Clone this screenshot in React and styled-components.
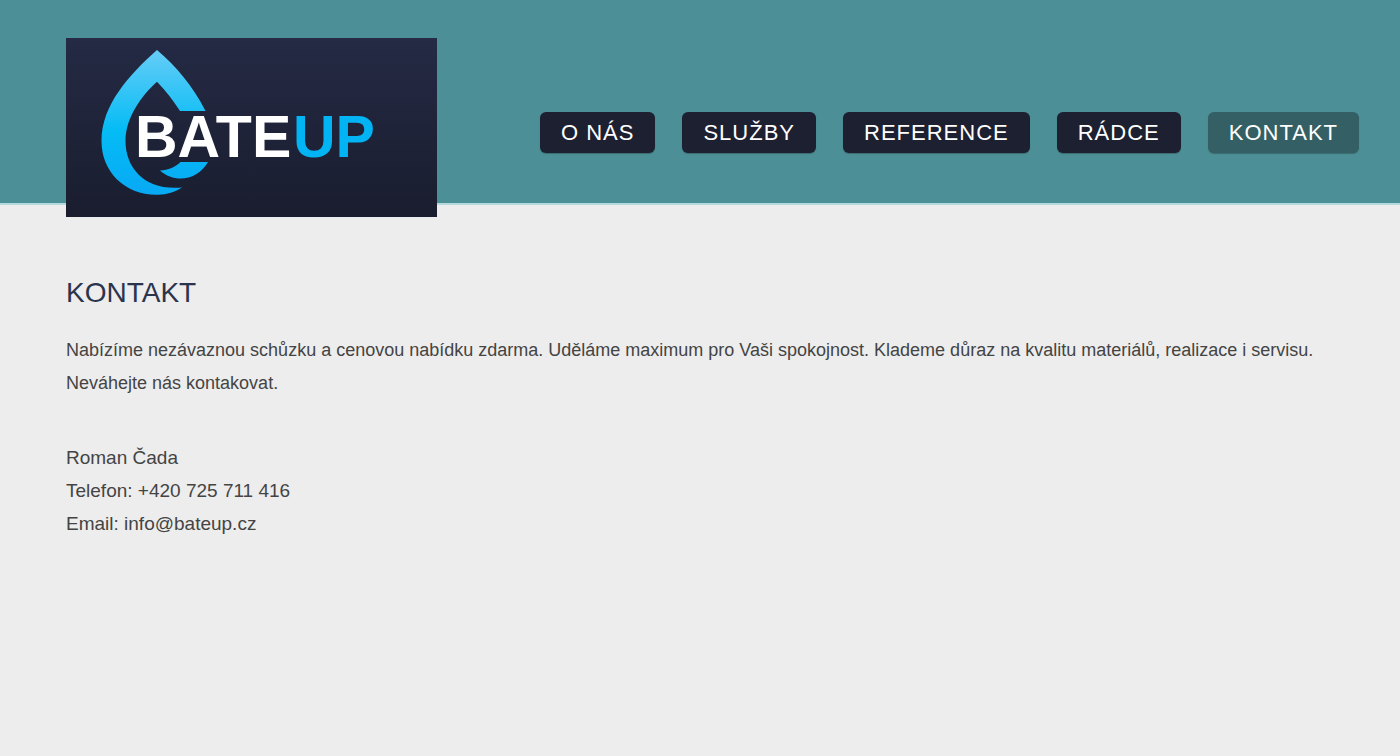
import React from "react";
import styled, { createGlobalStyle } from "styled-components";

const GlobalStyle = createGlobalStyle`
  * {
    box-sizing: border-box;
    margin: 0;
    padding: 0;
  }
  body {
    background: #ededed;
    color: #444;
    font-family: "Liberation Sans", Arial, sans-serif;
  }
`;

const Header = styled.header`
  display: flex;
  justify-content: space-between;
  align-items: flex-start;
  height: 205px;
  padding: 38px 41px 0 66px;
  background: #4d8f96;
  border-bottom: 2px solid #b4dadd;
`;

const LogoLink = styled.a`
  flex-shrink: 0;
  line-height: 0;
`;

const LogoText = styled.text`
  font-family: "Liberation Sans", Arial, sans-serif;
  font-size: 59px;
  font-weight: 700;
`;

const Nav = styled.nav`
  padding-top: 74px;
`;

const NavList = styled.ul`
  display: flex;
  gap: 27px;
  list-style: none;
`;

const NavLink = styled.a`
  display: block;
  padding: 0 21px;
  border-radius: 6px;
  background: ${({ $active }) => ($active ? "#345f64" : "#1c2030")};
  box-shadow: 0 1px 1px rgba(0, 0, 0, 0.25);
  color: #fff;
  font-size: 22px;
  line-height: 41px;
  letter-spacing: 1px;
  text-decoration: none;
  text-transform: uppercase;
  white-space: nowrap;
`;

const Content = styled.main`
  padding: 71px 66px;
`;

const Title = styled.h1`
  margin-bottom: 25px;
  color: #2b344d;
  font-size: 28px;
  font-weight: 400;
  line-height: 33px;
  text-transform: uppercase;
`;

const Text = styled.p`
  margin-bottom: 41px;
  font-size: 18px;
  line-height: 33px;
`;

const Contact = styled.address`
  font-size: 19px;
  font-style: normal;
  line-height: 33px;
`;

const ContactLink = styled.a`
  color: inherit;
  text-decoration: none;
`;

const links = [
  { name: "O nás", href: "#o-nas" },
  { name: "Služby", href: "#sluzby" },
  { name: "Reference", href: "#reference" },
  { name: "Rádce", href: "#radce" },
  { name: "Kontakt", href: "#kontakt", active: true },
];

const Logo = () => (
  <svg width="371" height="179" viewBox="0 0 371 179" role="img" aria-label="BateUp">
    <defs>
      <linearGradient id="logoBg" x1="0" y1="0" x2="0" y2="1">
        <stop offset="0" stopColor="#252a45" />
        <stop offset="1" stopColor="#191d2e" />
      </linearGradient>
      <linearGradient id="drop" x1="0" y1="12" x2="0" y2="157" gradientUnits="userSpaceOnUse">
        <stop offset="0" stopColor="#66cdf7" />
        <stop offset="0.55" stopColor="#05bcf5" />
        <stop offset="1" stopColor="#08a9f4" />
      </linearGradient>
    </defs>
    <rect width="371" height="179" fill="url(#logoBg)" />
    <g fill="url(#drop)">
      <path d="M91 12C110 28 127 48 139.500 73H114C107 62 100 53 91 43.700C75 58 59.500 80 59.500 103C59.500 131 80 153 116 149.500C109 154 100 157 91 156.700C59 157 35.500 134 35.500 103C35.500 67 63 37 91 12Z" />
      <path d="M114.500 124H142C132 142 109 146 94 132.500C102 132 110 129 114.500 124Z" />
    </g>
    <LogoText x="69" y="119" fill="#fff">BATE</LogoText>
    <LogoText x="227" y="119" fill="#02b4f3">UP</LogoText>
  </svg>
);

const App = () => (
  <>
    <GlobalStyle />
    <Header>
      <LogoLink href="#">
        <Logo />
      </LogoLink>
      <Nav>
        <NavList>
          {links.map(({ name, href, active }) => (
            <li key={href}>
              <NavLink
                href={href}
                $active={active}
                aria-current={active ? "page" : undefined}
              >
                {name}
              </NavLink>
            </li>
          ))}
        </NavList>
      </Nav>
    </Header>
    <Content>
      <Title>Kontakt</Title>
      <Text>
        Nabízíme nezávaznou schůzku a cenovou nabídku zdarma. Uděláme maximum
        pro Vaši spokojnost. Klademe důraz na kvalitu materiálů, realizace i
        servisu. Neváhejte nás kontakovat.
      </Text>
      <Contact>
        <p>Roman Čada</p>
        <p>
          Telefon: <ContactLink href="tel:+420725711416">+420 725 711 416</ContactLink>
        </p>
        <p>
          Email: <ContactLink href="mailto:info@bateup.cz">info@bateup.cz</ContactLink>
        </p>
      </Contact>
    </Content>
  </>
);

export default App;
